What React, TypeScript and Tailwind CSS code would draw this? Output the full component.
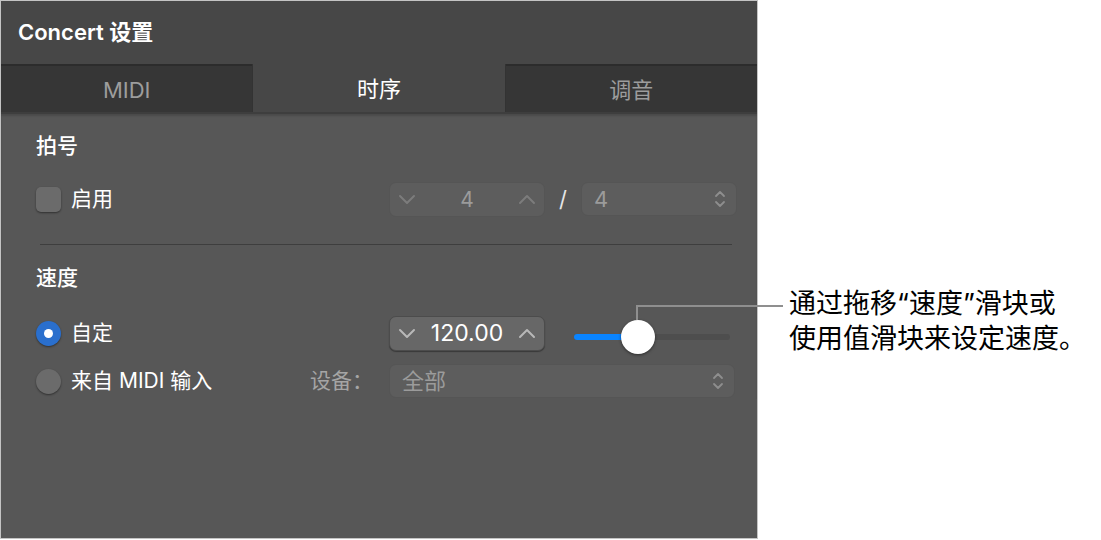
import React from "react"

const font = { fontFamily: '"Inter", "Noto Sans CJK SC", sans-serif' }

function Chevron({ dir, className }: { dir: "up" | "down"; className?: string }) {
  return (
    <svg width="18" height="11" viewBox="0 0 18 11" className={className}>
      <polyline
        points={dir === "down" ? "2,2 9,9 16,2" : "2,9 9,2 16,9"}
        fill="none"
        stroke="currentColor"
        strokeWidth="2"
        strokeLinecap="round"
        strokeLinejoin="round"
      />
    </svg>
  )
}

function UpDown() {
  return (
    <svg width="12" height="20" viewBox="0 0 12 20" className="text-[#8e8e8e]">
      <polyline points="2,7 6,3 10,7" fill="none" stroke="currentColor" strokeWidth="1.8" strokeLinecap="round" strokeLinejoin="round" />
      <polyline points="2,13 6,17 10,13" fill="none" stroke="currentColor" strokeWidth="1.8" strokeLinecap="round" strokeLinejoin="round" />
    </svg>
  )
}

function Stepper({ value, enabled }: { value: string; enabled?: boolean }) {
  return (
    <div
      className={
        "flex items-center justify-between w-[156px] h-[35px] rounded-[7px] px-[8px] border " +
        (enabled
          ? "bg-[#676767] border-[#4c4c4c] shadow-[0_1px_1px_rgba(0,0,0,0.35)] text-white"
          : "bg-[#5d5d5d] border-[#555555] text-[#9b9b9b]")
      }
    >
      <Chevron dir="down" className={enabled ? "text-[#b8b8b8]" : "text-[#7c7c7c]"} />
      <span className={(enabled ? "text-[23px]" : "text-[21px]") + " leading-none"}>{value}</span>
      <Chevron dir="up" className={enabled ? "text-[#b8b8b8]" : "text-[#7c7c7c]"} />
    </div>
  )
}

function Select({ value, width }: { value: string; width: string }) {
  return (
    <div className={"flex items-center justify-between h-[34px] rounded-[7px] pl-[12px] pr-[10px] bg-[#5d5d5d] border border-[#555555] " + width}>
      <span className="text-[22px] leading-none text-[#9b9b9b]">{value}</span>
      <UpDown />
    </div>
  )
}

export default function App() {
  return (
    <div className="relative flex w-[1101px] h-[540px] bg-white" style={font}>
      <div className="flex flex-col w-[758px] h-[539px] border border-[#c4c4c4] bg-[#575757]">
        <div className="h-[63px] bg-[#474747] flex items-center pl-[17px]">
          <span className="text-[22px] font-semibold text-white">Concert 设置</span>
        </div>

        <div className="flex h-[50px] border-b-2 border-[#3e3e3e]">
          <div className="flex-1 flex items-center justify-center pt-[3px] bg-[#363636] border-t-2 border-[#2c2c2c] text-[22px] text-[#9d9d9d]">
            MIDI
          </div>
          <div className="flex-1 flex items-center justify-center pt-[3px] bg-[#474747] border-l border-r border-[#333333] text-[22px] text-white">
            时序
          </div>
          <div className="flex-1 flex items-center justify-center pt-[3px] bg-[#363636] border-t-2 border-[#2c2c2c] text-[22px] text-[#9d9d9d]">
            调音
          </div>
        </div>

        <div className="flex flex-col pl-[35px] pt-[18px] text-white text-[21px] shadow-[inset_0_2px_2px_rgba(0,0,0,0.15)]">
          <div className="h-[28px] flex items-center font-medium">拍号</div>

          <div className="flex items-center mt-[21px] h-[36px]">
            <div className="w-[353px] flex items-center gap-[10px]">
              <div className="w-[25px] h-[25px] rounded-[5px] bg-[#6b6b6b] shadow-[0_1px_2px_rgba(0,0,0,0.45)]" />
              <span>启用</span>
            </div>
            <Stepper value="4" />
            <span className="w-[36px] text-center text-[22px] text-[#e6e6e6]">/</span>
            <Select value="4" width="w-[156px]" />
          </div>

          <div className="mt-[27px] mr-[25px] ml-[4px] h-px bg-[#3e3e3e]" />

          <div className="h-[28px] mt-[19px] flex items-center font-medium">速度</div>

          <div className="flex items-center mt-[23px] h-[36px]">
            <div className="w-[353px] flex items-center gap-[10px]">
              <div className="w-[25px] h-[25px] rounded-full bg-[#2a6fcd] flex items-center justify-center shadow-[0_1px_2px_rgba(0,0,0,0.45)]">
                <div className="w-[9px] h-[9px] rounded-full bg-white" />
              </div>
              <span>自定</span>
            </div>
            <Stepper value="120.00" enabled />
            <div className="relative ml-[29px] mt-[8px] w-[156px] h-[6px] rounded-full bg-[#4e4e4e]">
              <div className="absolute left-0 top-0 h-[6px] w-[64px] rounded-full bg-[#0a84ff]" />
              <div className="absolute left-[47px] top-[-14px] w-[34px] h-[34px] rounded-full bg-white shadow-[0_1px_3px_rgba(0,0,0,0.5)]" />
            </div>
          </div>

          <div className="flex items-center mt-[12px] h-[36px]">
            <div className="w-[353px] flex items-center justify-between pr-[16px]">
              <div className="flex items-center gap-[10px]">
                <div className="w-[25px] h-[25px] rounded-full bg-[#6b6b6b] shadow-[0_1px_2px_rgba(0,0,0,0.45)]" />
                <span>来自 MIDI 输入</span>
              </div>
              <span className="text-[#a5a5a5]">设备：</span>
            </div>
            <Select value="全部" width="w-[346px]" />
          </div>
        </div>
      </div>

      <div className="pl-[31px] pt-[286px] text-[27px] leading-[35px] text-black whitespace-nowrap">
        <div>通过拖移“速度”滑块或</div>
        <div>使用值滑块来设定速度。</div>
      </div>

      {/* callout leader from the slider knob */}
      <div className="absolute left-[636px] top-[305px] w-[147px] h-[2px] bg-[#8f8f8f]" />
      <div className="absolute left-[636px] top-[305px] w-[2px] h-[15px] bg-[#8f8f8f]" />
    </div>
  )
}
